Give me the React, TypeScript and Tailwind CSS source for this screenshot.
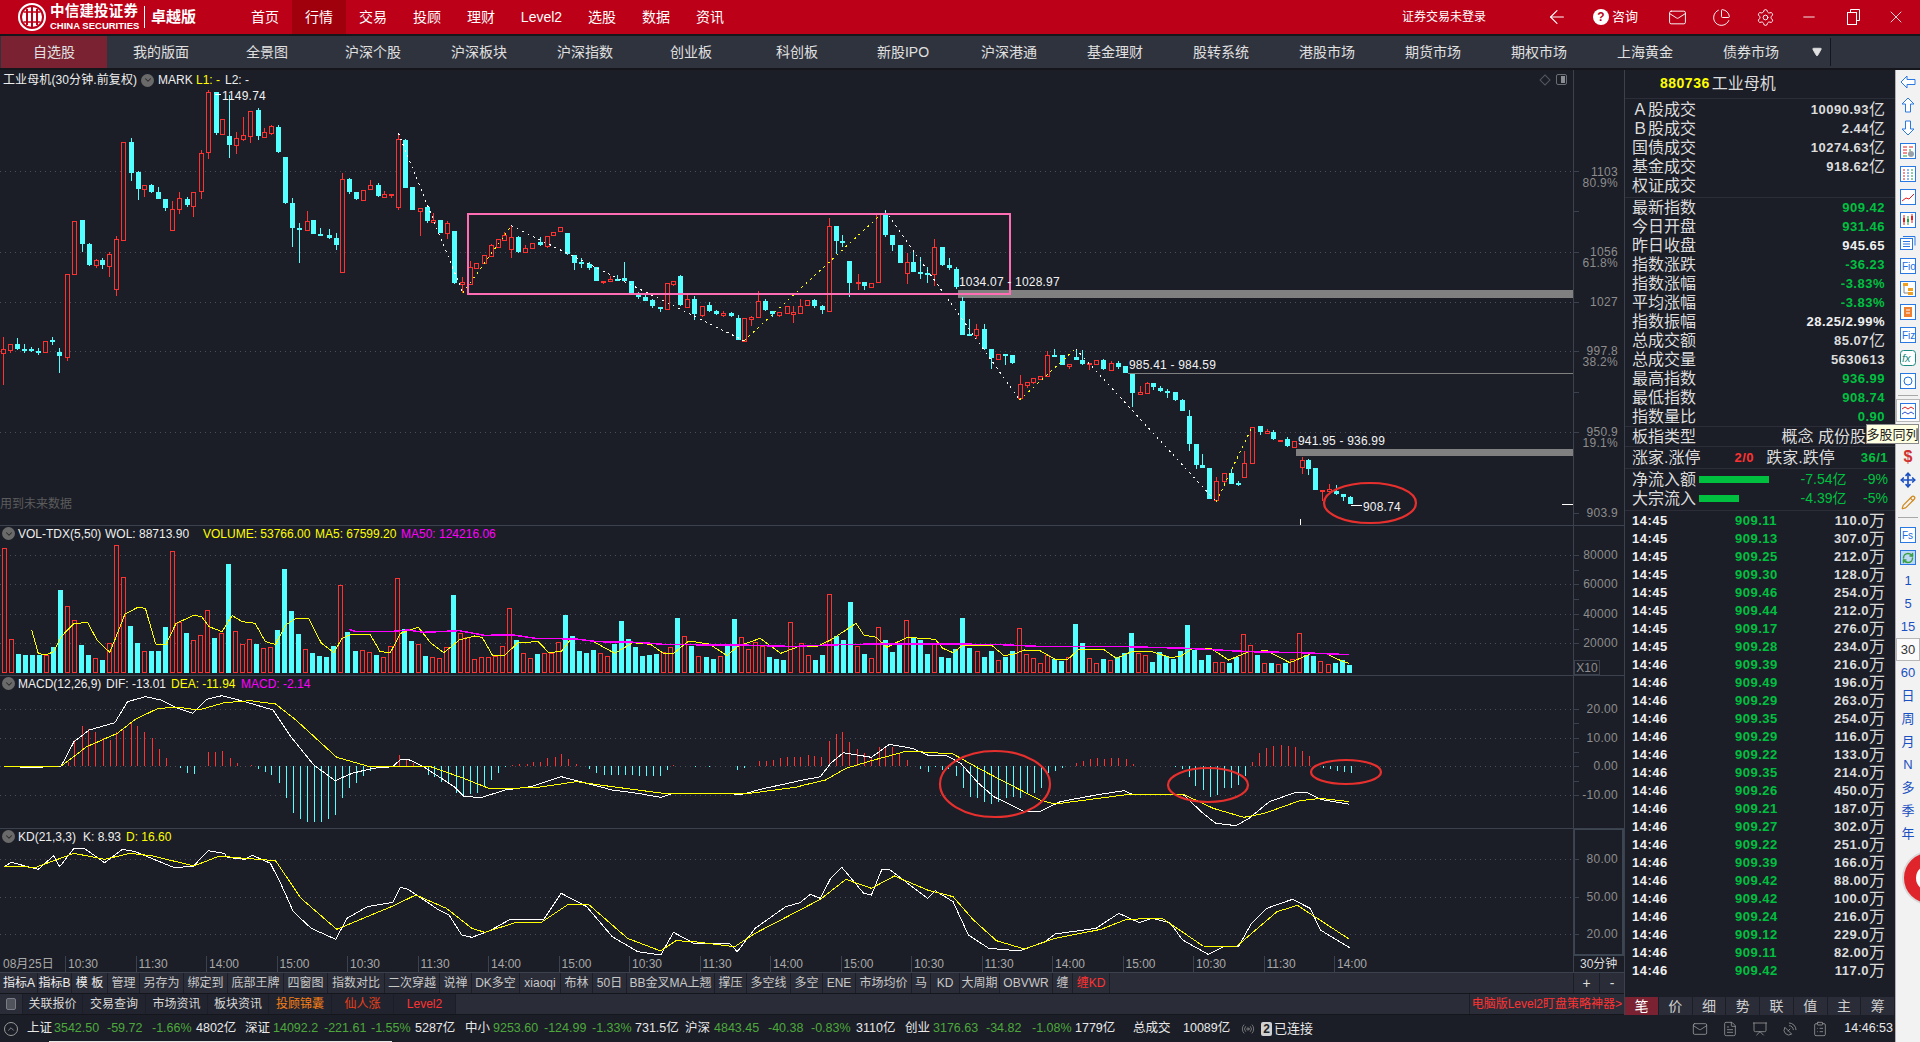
import React from 'react';
import {
  ArrowLeft, Mail, ChartPie, Settings, Minus, X, ChevronDown, ChevronUp, Triangle, Radio,
  FileText, Presentation, SatelliteDish, ClipboardList, Move, Pencil, RefreshCw,
} from 'lucide-react';

type Candle = [number, number, number, number, number, number]; // x, up, bodyTop, bodyBottom, high, low

// measured from the 30 minute chart, left / middle / right part
const candlesA: Candle[] = [
  [8,1,868,878,830,975],[25,1,853,870,853,878],[42,0,852,866,835,870],[59,0,866,870,852,878],[76,0,868,873,860,876],[93,0,872,876,865,884],
  [110,1,842,875,842,875],[127,0,840,844,830,855],[145,0,876,888,865,938],[165,1,643,892,643,902],[182,1,484,643,484,643],[200,0,480,551,480,576],
  [217,0,552,614,548,618],[234,1,601,616,597,624],[251,0,600,614,594,627],[268,1,582,617,575,650],[285,1,538,688,528,707],[302,1,247,539,247,541],
  [320,0,246,339,234,362],[337,0,336,386,333,420],[354,1,376,388,376,410],[371,0,375,396,372,400],[388,0,396,416,380,418],[405,0,417,444,417,453],
  [422,1,448,509,423,509],[439,1,415,448,396,461],[457,0,417,435,410,440],[474,1,397,437,397,470],[493,1,280,394,270,416],[510,1,97,277,90,296],
  [528,0,97,219,97,225],[545,1,178,221,178,221],[562,0,228,255,105,293],[579,1,235,256,216,281],[596,1,226,236,170,243],[613,1,154,227,154,248],
  [631,0,150,228,145,240],[648,1,217,231,205,233],[665,1,198,218,195,224],[682,0,200,276,196,279],[699,0,291,430,291,432],[716,0,429,503,415,560],
  [733,0,504,507,490,608],[751,1,484,509,453,509],[768,0,480,522,480,522],[785,0,522,525,505,525],[805,0,525,534,508,538],[822,0,534,554,520,570],
  [839,1,358,635,340,635],[856,0,357,396,354,402],[873,0,396,417,396,420],[890,1,389,419,389,423],[907,1,376,388,361,388],[925,0,375,407,369,410],
  [942,1,402,410,393,410],[959,1,403,405,403,413],[976,1,238,440,225,450],[993,0,240,384,238,384],[1010,0,381,449,381,449],[1028,1,443,452,443,527],
  [1045,0,442,484,437,490],[1062,1,480,485,460,485],[1079,0,480,519,480,519],[1096,1,490,520,484,537],[1113,0,513,668,513,672],[1133,1,667,671,652,700],
  [1151,1,622,671,604,671],[1167,1,608,623,608,623],[1185,1,586,610,586,612],[1202,1,556,587,552,590],[1219,1,538,560,538,560],[1236,1,526,539,515,539],
  [1253,1,530,568,497,594],[1270,0,531,577,528,580],[1287,1,565,577,556,577],[1304,1,548,565,548,565],[1322,0,546,555,532,557],[1339,1,527,557,527,564],
  [1356,1,515,526,515,526],[1373,1,500,514,500,514],[1390,0,520,581,520,584],[1407,0,586,608,584,630],[1424,0,606,610,595,624],[1442,0,612,624,607,630],
  [1461,0,622,662,620,662],[1478,1,662,666,662,671],[1495,1,657,662,648,664],[1512,0,656,660,646,664],[1530,0,653,664,606,664],[1547,0,664,698,664,698],[1564,0,705,712,695,716],
];
const candlesB: Candle[] = [
  [13,0,710,722,702,722],[30,0,720,738,717,744],[48,0,742,744,742,755],[65,1,670,746,670,746],[82,1,664,671,664,678],[99,0,648,736,646,738],
  [116,1,718,740,705,740],[133,0,718,763,708,780],[151,1,737,764,737,770],[168,0,736,753,727,757],[185,0,754,762,750,765],[204,1,760,764,753,770],
  [222,0,759,768,755,770],[239,0,775,840,765,840],[256,1,775,842,775,842],[272,1,770,776,768,797],[290,1,724,770,693,770],[307,0,723,750,717,752],
  [324,0,754,762,752,772],[341,1,757,764,757,770],[359,1,739,758,739,758],[376,1,757,761,737,788],[393,1,737,758,717,762],[410,1,721,736,721,736],
  [427,0,720,738,716,744],[445,0,739,750,735,762],[462,1,499,752,474,752],[479,0,498,543,498,582],[496,0,543,546,525,562],[513,0,603,668,603,710],
  [533,1,666,669,642,690],[550,0,666,678,666,690],[567,1,668,680,668,680],[584,1,460,665,460,670],[601,0,460,525,450,530],[618,0,525,555,525,572],
  [636,0,555,608,555,608],[653,1,607,640,578,672],[670,0,606,636,576,636],[687,0,636,641,592,657],[704,0,640,643,620,670],[721,1,562,643,537,678],
  [739,0,561,615,561,618],[756,0,615,625,595,630],[773,0,627,682,622,688],[790,0,724,825,712,825],[807,0,822,825,778,827],[824,1,808,826,792,838],
  [844,0,808,867,793,871],[861,0,867,893,867,926],[878,1,883,896,883,900],[895,0,883,886,883,915],[912,0,885,909,885,912],[930,1,973,1015,945,1020],
  [947,1,965,975,965,985],[964,1,955,966,955,973],[981,1,949,957,949,958],[998,1,885,948,874,950],[1015,0,885,887,867,887],[1033,0,885,915,885,915],
  [1050,1,913,917,913,927],[1067,0,892,899,866,899],[1084,0,901,912,870,915],[1101,1,909,912,909,930],[1118,1,901,912,901,915],[1135,0,900,927,898,930],
  [1153,1,909,929,903,929],[1172,0,909,922,903,926],[1189,0,918,938,918,938],[1206,0,942,998,942,1042],[1224,1,996,1001,978,1001],[1241,1,969,998,966,1000],
  [1258,0,969,981,969,990],[1275,0,984,993,978,995],[1292,0,994,997,987,1014],[1310,0,996,1020,996,1022],[1327,0,1020,1052,1017,1053],[1344,0,1068,1152,1050,1172],
  [1361,0,1152,1214,1152,1226],[1378,0,1215,1223,1182,1223],[1395,0,1225,1316,1225,1316],[1412,1,1264,1320,1252,1320],[1430,1,1240,1262,1240,1270],[1447,0,1240,1271,1228,1271],
  [1464,0,1270,1273,1262,1278],[1481,1,1210,1252,1172,1252],[1500,1,1102,1210,1102,1210],[1518,0,1098,1116,1098,1124],[1535,1,1114,1118,1106,1122],[1552,0,1116,1137,1110,1140],
];
const candlesC: Candle[] = [
  [120,1,1139,1141,1139,1146],[142,0,1136,1158,1132,1160],[163,1,1144,1160,1144,1160],[185,1,1200,1220,1191,1242],[205,0,1201,1227,1197,1245],[226,0,1224,1290,1224,1290],
  [247,1,1290,1294,1290,1323],[268,1,1288,1292,1272,1292],[289,0,1292,1302,1276,1304],[310,0,1303,1310,1303,1323],[331,0,1312,1331,1308,1331],
];

const candles = [
  ...candlesA.map((c) => ({ c, x: c[0] / 2.45 })),
  ...candlesB.map((c) => ({ c, x: 640 + c[0] / 2.45 })),
  ...candlesC.map((c) => ({ c, x: 1240 + c[0] / 3 })),
];

const volLeft: [number, number][] = [[1,85],[1,358],[0,403],[0,405],[0,405],[0,405],[1,405],[0,381],[0,210],[1,259],[1,301],[0,375],[0,405],[1,415],[0,420],[1,370],[1,75],[1,172],[0,318],[0,369],[1,393],[0,393],[0,393],[0,321],[1,94],[1,306],[0,339],[1,361],[1,346],[1,270],[0,354],[1,340],[0,132],[1,334],[1,372],[1,358],[0,372],[1,385],[1,382],[0,330],[0,147],[0,273],[0,342],[1,388],[0,400],[0,408],[0,411],[0,378],[1,195],[0,336],[0,393],[1,390],[1,397],[0,405],[1,410],[1,378],[1,175],[0,328],[0,363],[1,372],[0,408],[1,412],[1,414],[1,382],[0,225],[1,340],[1,350],[1,418],[1,412],[1,412],[1,408],[1,378],[1,265],[0,360],[1,400],[1,415],[0,402],[1,398],[1,398],[1,366],[0,285],[0,348],[0,393],[0,400],[0,390],[1,400],[1,408],[0,372],[0,303],[0,357],[0,381],[0,408],[0,405],[0,402],[1,397],[1,380],[0,294],[1,348],[0,378],[1,408],[0,411],[0,417],[1,408],[0,373],[0,297],[1,352],[1,388],[1,367],[1,378],[0,411],[0,417],[0,421],[1,307]];
const volRight: [number, number][] = [[1,370],[1,406],[0,420],[0,405],[1,223],[0,348],[0,360],[0,246],[1,377],[0,402],[1,415],[1,322],[0,360],[0,396],[0,373],[1,301],[0,355],[0,360],[0,402],[1,370],[0,411],[0,414],[0,387],[0,294],[0,384],[1,393],[0,411],[0,393],[1,420],[0,411],[0,393],[1,325],[1,402],[1,415],[1,430],[1,406],[0,417],[0,423],[1,412],[0,312],[0,369],[1,415],[1,430],[0,417],[1,420],[0,411],[0,399],[0,339],[1,399],[1,406],[0,426],[0,396],[0,408],[0,417],[0,393],[0,315],[0,390],[0,420],[0,405],[1,425],[1,427],[0,429],[0,411],[1,343],[1,376],[0,405],[1,430],[0,429],[1,433],[0,429],[1,418],[1,340],[0,405],[0,408],[1,424],[1,433],[0,430],[0,421],[0,435]];

const volBars = [
  ...volLeft.map(([up, top], i) => ({ up, top, x: 3.5 + 7.02 * i })),
  ...volRight.map(([up, top], i) => ({ up, top, x: 801 + 7.02 * i })),
];

type Pts = number[][];
const joinLine = (left: Pts, right: Pts) =>
  [...left.map(([x, y]) => `${x / 1.96},${520 + y / 3}`), ...right.map(([x, y]) => `${800 + x / 1.96},${520 + y / 3}`)].join(' ');

const ma5 = joinLine(
  [[62,330],[75,400],[90,405],[105,395],[120,350],[145,310],[172,308],[190,360],[215,397],[225,360],[245,282],[270,262],[285,265],[305,372],[325,375],[345,310],[380,286],[395,290],[410,320],[435,335],[455,287],[475,305],[500,310],[520,365],[540,373],[560,315],[580,295],[605,296],[630,370],[655,398],[670,355],[690,342],[725,342],[745,395],[765,398],[785,340],[820,322],[845,370],[870,398],[900,360],[930,348],[945,352],[965,405],[990,405],[1015,368],[1055,365],[1075,397],[1100,395],[1120,355],[1160,362],[1205,400],[1240,368],[1275,373],[1300,400],[1320,400],[1350,363],[1390,372],[1425,407],[1445,380],[1490,355],[1530,400],[1568,378]],
  [[0,378],[30,381],[60,360],[90,330],[110,310],[125,345],[150,352],[170,382],[210,352],[265,358],[280,385],[300,398],[320,375],[375,375],[400,407],[420,402],[440,390],[470,392],[500,418],[525,418],[545,390],[595,388],[620,415],[650,395],[690,395],[725,412],[745,410],[770,385],[805,385],[840,420],[880,395],[915,392],[960,428],[1000,402],[1030,400],[1060,422],[1077,430]],
);
const ma50 = joinLine(
  [[685,328],[695,334],[770,334],[800,330],[830,337],[900,332],[950,346],[1005,345],[1050,355],[1130,357],[1170,365],[1250,367],[1300,373],[1400,375],[1450,375],[1568,380]],
  [[0,378],[100,373],[200,372],[380,373],[480,380],[640,380],[760,385],[880,395],[980,398],[1077,404]],
);
const dif = joinLine(
  [[8,739],[55,742],[85,741],[120,738],[145,665],[175,630],[225,608],[250,545],[285,530],[315,540],[345,563],[378,580],[405,538],[435,527],[480,545],[535,570],[570,650],[615,735],[657,782],[690,760],[730,745],[770,740],[785,718],[800,718],[830,740],[860,770],[890,800],[910,830],[945,832],[990,810],[1040,800],[1100,770],[1150,790],[1200,810],[1250,820],[1295,832],[1320,820],[1430,820],[1450,825],[1490,808],[1568,782]],
  [[0,782],[40,770],[60,730],[85,698],[140,712],[175,673],[220,685],[250,705],[285,705],[315,730],[350,790],[380,830],[440,875],[470,875],[510,845],[580,825],[635,812],[650,822],[750,822],[790,880],[815,910],[855,917],[880,895],[920,845],[970,818],[995,818],[1020,838],[1077,853]],
);
const dea = joinLine(
  [[8,739],[120,738],[170,680],[230,640],[265,598],[310,565],[350,562],[390,570],[440,548],[490,542],[540,552],[580,600],[660,712],[720,738],[780,738],[840,738],[900,770],[960,806],[1050,803],[1130,785],[1200,800],[1300,820],[1470,820],[1568,800]],
  [[0,798],[50,780],[90,745],[140,722],[210,693],[300,702],[350,745],[470,840],[500,852],[650,822],[750,822],[810,865],[870,892],[910,880],[980,842],[1020,835],[1077,845]],
);
const kLine = joinLine(
  [[8,1040],[22,1027],[75,1048],[105,1007],[117,1040],[145,985],[165,985],[205,1028],[240,988],[265,995],[340,1042],[378,1040],[408,992],[440,1000],[445,1012],[480,1018],[495,1006],[530,1030],[550,1090],[575,1175],[610,1225],[658,1258],[680,1195],[720,1160],[770,1147],[785,1102],[800,1108],[860,1170],[880,1185],[905,1245],[925,1252],[960,1232],[1000,1198],[1065,1200],[1100,1120],[1150,1160],[1200,1250],[1250,1295],[1295,1305],[1320,1237],[1360,1270],[1430,1270],[1445,1295],[1480,1225],[1540,1160],[1568,1148]],
  [[0,1148],[20,1123],[40,1135],[60,1075],[82,1042],[125,1120],[140,1125],[160,1050],[175,1048],[250,1135],[265,1112],[300,1145],[330,1245],[370,1285],[410,1290],[435,1290],[480,1265],[500,1242],[580,1225],[625,1180],[665,1208],[690,1195],[725,1208],[750,1260],[800,1303],[830,1280],[860,1278],[885,1210],[915,1165],[965,1138],[1000,1165],[1020,1230],[1077,1283]],
);
const dLine = joinLine(
  [[8,1038],[70,1042],[145,1000],[205,1018],[255,1000],[300,1008],[380,1038],[430,1008],[480,1015],[540,1022],[590,1135],[660,1228],[770,1158],[815,1125],[875,1165],[925,1225],[950,1237],[1010,1208],[1060,1208],[1115,1152],[1155,1155],[1230,1255],[1295,1293],[1325,1262],[1360,1265],[1440,1280],[1480,1240],[1568,1170]],
  [[0,1170],[40,1138],[90,1078],[140,1105],[185,1068],[250,1110],[300,1130],[340,1200],[385,1262],[440,1287],[500,1255],[590,1228],[640,1198],[710,1195],[790,1278],[855,1280],[935,1175],[975,1156],[1077,1258]],
);

const macdLeft: number[][] = [[133,725],[146,660],[160,618],[173,628],[187,635],[201,655],[215,660],[228,635],[242,630],[256,605],[269,618],[283,636],[297,655],[311,687],[325,713],[338,737],[352,745],[366,760],[380,762],[408,697],[422,695],[436,693],[450,715],[464,730],[491,736],[505,746],[519,755],[532,765],[546,790],[560,833],[574,878],[588,897],[601,905],[615,907],[629,905],[643,897],[657,885],[671,833],[685,805],[698,790],[712,768],[726,753],[740,745],[754,742],[782,706],[796,720],[810,730],[824,735],[838,765],[851,770],[865,785],[879,785],[893,820],[907,832],[921,822],[935,820],[948,800],[962,780],[976,760],[990,741],[1004,734],[1018,733],[1032,731],[1045,727],[1059,725],[1073,714],[1087,712],[1100,702],[1114,716],[1128,732],[1155,748],[1169,758],[1183,765],[1197,765],[1211,765],[1225,765],[1238,765],[1252,768],[1266,768],[1280,768],[1294,768],[1308,750],[1320,736],[1362,741],[1390,741],[1445,750],[1459,745],[1488,722],[1501,722],[1515,720],[1529,715],[1543,711],[1557,712]];
const macdRight: number[][] = [[0,712],[15,706],[28,708],[42,712],[56,664],[70,642],[83,636],[97,665],[112,687],[126,700],[140,713],[154,680],[167,680],[181,680],[195,700],[209,720],[222,738],[236,748],[250,755],[264,742],[278,750],[291,748],[305,768],[319,805],[333,830],[347,835],[361,845],[375,852],[389,845],[403,835],[417,832],[431,835],[445,820],[459,820],[472,805],[486,760],[499,753],[513,743],[527,738],[541,730],[554,723],[568,716],[582,714],[596,716],[610,715],[624,714],[638,716],[652,732],[680,738],[707,738],[735,742],[748,748],[762,770],[775,797],[789,810],[803,830],[817,825],[831,805],[845,803],[858,795],[872,768],[886,726],[900,698],[914,685],[928,678],[942,675],[956,678],[970,682],[983,692],[997,708],[1025,745],[1038,748],[1052,752],[1066,755],[1080,760]];
const macdBars = [
  ...macdLeft.map(([x, y]) => ({ x: x / 1.96, y: 520 + y / 3 })),
  ...macdRight.map(([x, y]) => ({ x: 800 + x / 1.96, y: 520 + y / 3 })),
];

const zigzag: [number, number, string][] = [
  [398.4, 133, '#ffffff'], [462.9, 293, '#ffff00'], [511.4, 225.7, '#ffffff'], [744, 340.7, '#ffff00'], [885, 210.7, '#ffffff'],
  [1019.6, 400, '#ffff00'], [1075.5, 348.7, '#ffffff'], [1216.3, 501.7, '#ffff00'], [1252.2, 426.7, '#ffffff'],
];

const GRID = '#4b4e58';
const AXIS = '#3c414e';
const LABEL = '#8d8d8d';

const Grid = ({ ys, x2 = 1573 }: { ys: number[]; x2?: number }) => (
  <>
    {ys.map((y) => (
      <line key={y} x1={0} x2={x2} y1={y + 0.5} y2={y + 0.5} stroke={GRID} strokeDasharray="1 4" />
    ))}
  </>
);

const Axis = ({ top, bottom, labels, ticks }: { top: number; bottom: number; labels: [string, number][]; ticks: number[] }) => (
  <g>
    <line x1={1573.5} x2={1573.5} y1={top} y2={bottom} stroke={AXIS} />
    {ticks.map((y) => (
      <line key={y} x1={1574} x2={1579} y1={y + 0.5} y2={y + 0.5} stroke={AXIS} />
    ))}
    {labels.map(([t, y]) => (
      <text key={t} x={1618} y={y + 4} textAnchor="end" fontSize={12} fill={LABEL} letterSpacing={0.3}>
        {t}
      </text>
    ))}
  </g>
);

const Ellipse = ({ cx, cy, rx, ry }: { cx: number; cy: number; rx: number; ry: number }) => (
  <ellipse cx={cx} cy={cy} rx={rx} ry={ry} fill="none" stroke="#e7302e" strokeWidth={2.2} />
);

const Knob = () => (
  <span className="flex h-[13px] w-[13px] shrink-0 items-center justify-center rounded-full bg-[#6a6a6a]">
    <ChevronDown size={10} strokeWidth={2.5} className="text-[#2a2a2a]" />
  </span>
);

const MainPane = () => (
  <div className="relative h-[456px] border-b border-[#3c414e]">
    <svg width={1624} height={455} viewBox="0 70 1624 455" className="block">
      <Grid ys={[171, 252, 302, 351, 432]} />
      <g shapeRendering="crispEdges">
        <rect x={958} y={290} width={615} height={8} fill="#808080" />
        <rect x={1296} y={449} width={277} height={7} fill="#808080" />
        <rect x={1128} y={373} width={445} height={1} fill="#808080" />
        {candles.map(({ c, x }, i) => {
          const [, up, top, bot, hi, lo] = c;
          const px = Math.round(x);
          const y = (v: number) => Math.round(60 + v / 3);
          const color = up ? '#ff3232' : '#54ffff';
          return (
            <g key={i}>
              <line x1={px + 0.5} x2={px + 0.5} y1={y(hi)} y2={y(lo)} stroke={color} />
              {up ? (
                <rect x={px - 1.5} y={y(top) + 0.5} width={4} height={Math.max(y(bot) - y(top), 1)} fill="#1b1e27" stroke={color} />
              ) : (
                <rect x={px - 2} y={y(top)} width={5} height={Math.max(y(bot) - y(top), 2)} fill={color} />
              )}
            </g>
          );
        })}
        {zigzag.slice(0, -1).map(([x, y, color], i) => (
          <line key={i} x1={x} y1={y} x2={zigzag[i + 1][0]} y2={zigzag[i + 1][1]} stroke={color} strokeDasharray="2 4" />
        ))}
        <rect x={468} y={214} width={542} height={80} fill="none" stroke="#ff6eb4" strokeWidth={2} />
        <line x1={215} x2={221} y1={94} y2={94} stroke="#fff" />
        <line x1={1351} x2={1362} y1={505} y2={505} stroke="#fff" />
        <line x1={1562} x2={1573} y1={504} y2={504} stroke="#fff" />
        <line x1={1300.5} x2={1300.5} y1={519} y2={525} stroke="#fff" />
      </g>
      <Ellipse cx={1370} cy={503} rx={46} ry={20} />
      <g fontSize={12} fill="#f2f2f2" letterSpacing={0.2}>
        <text x={222} y={100}>1149.74</text>
        <text x={959} y={286}>1034.07 - 1028.97</text>
        <text x={1129} y={369}>985.41 - 984.59</text>
        <text x={1298} y={445}>941.95 - 936.99</text>
        <text x={1363} y={511}>908.74</text>
      </g>
      <Axis
        top={70}
        bottom={525}
        ticks={[171, 211, 252, 302, 351, 392, 432, 513]}
        labels={[['1103', 172], ['80.9%', 183], ['1056', 252], ['61.8%', 263], ['1027', 302], ['997.8', 351], ['38.2%', 362], ['950.9', 432], ['19.1%', 443], ['903.9', 513]]}
      />
    </svg>
    <div className="absolute left-[3px] top-[2px] flex h-[16px] items-center text-[12px] leading-none text-[#eeeeee]">
      <span className="w-[138px] tracking-[0.1px]">工业母机(30分钟.前复权)</span>
      <Knob />
      <span className="ml-[4px] w-[38px]">MARK</span>
      <span className="w-[29px] text-[#ffff00]">L1: -</span>
      <span>L2: -</span>
    </div>
    <div className="absolute left-0 top-[428px] text-[12px] leading-none text-[#5c5c5c]">用到未来数据</div>
    <div className="absolute left-[1541px] top-[4px] flex items-center gap-[7px]">
      <span className="h-[8px] w-[8px] rotate-45 border border-[#55585f]" />
      <span className="flex h-[11px] w-[11px] justify-end rounded-[2px] border border-[#6a6d74] p-[1px]">
        <span className="h-full w-[4px] bg-[#8a8d94]" />
      </span>
    </div>
  </div>
);

const VolPane = () => (
  <div className="relative h-[150px] border-b border-[#3c414e]">
    <svg width={1624} height={149} viewBox="0 526 1624 149" className="block">
      <Grid ys={[555, 584, 614, 643]} />
      <g shapeRendering="crispEdges">
        {volBars.map(({ up, top, x }, i) => {
          const px = Math.round(x);
          const y = Math.round(520 + top / 3);
          return up ? (
            <rect key={i} x={px - 1.5} y={y + 0.5} width={4} height={672 - y} fill="#1b1e27" stroke="#ff3232" />
          ) : (
            <rect key={i} x={px - 2} y={y} width={5} height={673 - y} fill="#54ffff" />
          );
        })}
        <polyline points={ma5} fill="none" stroke="#ffff00" />
        <polyline points={ma50} fill="none" stroke="#ff00ff" strokeWidth={1.5} />
      </g>
      <Axis
        top={526}
        bottom={675}
        ticks={[555, 570, 584, 599, 614, 629, 643]}
        labels={[['80000', 555], ['60000', 584], ['40000', 614], ['20000', 643]]}
      />
    </svg>
    <div className="absolute left-[1574px] top-[134px] flex h-[15px] w-[26px] items-center justify-center border border-[#3c414e] text-[12px] leading-none text-[#8d8d8d]">
      X10
    </div>
    <div className="absolute left-[2px] top-0 flex h-[15px] items-center text-[12px] leading-none text-[#eeeeee]">
      <Knob />
      <span className="ml-[3px] w-[87px]">VOL-TDX(5,50)</span>
      <span className="w-[98px]">WOL: 88713.90</span>
      <span className="w-[112px] text-[#ffff00]">VOLUME: 53766.00</span>
      <span className="w-[86px] text-[#ffff00]">MA5: 67599.20</span>
      <span className="text-[#ff00ff]">MA50: 124216.06</span>
    </div>
  </div>
);

const MacdPane = () => (
  <div className="relative h-[153px] border-b border-[#3c414e]">
    <svg width={1624} height={152} viewBox="0 676 1624 152" className="block">
      <Grid ys={[709, 738, 766, 795]} />
      <g shapeRendering="crispEdges">
        {macdBars.map(({ x, y }, i) => (
          <line key={i} x1={Math.round(x) + 0.5} x2={Math.round(x) + 0.5} y1={766} y2={y} stroke={y < 766 ? '#ff3232' : '#54ffff'} />
        ))}
        <polyline points={dif} fill="none" stroke="#ffffff" />
        <polyline points={dea} fill="none" stroke="#ffff00" />
      </g>
      <Ellipse cx={995} cy={784} rx={55} ry={33} />
      <Ellipse cx={1208} cy={785} rx={40} ry={17} />
      <Ellipse cx={1346} cy={772} rx={35} ry={12} />
      <Axis
        top={676}
        bottom={828}
        ticks={[709, 723, 738, 752, 766, 781, 795]}
        labels={[['20.00', 709], ['10.00', 738], ['0.00', 766], ['-10.00', 795]]}
      />
    </svg>
    <div className="absolute left-[2px] top-0 flex h-[15px] items-center text-[12px] leading-none text-[#eeeeee]">
      <Knob />
      <span className="ml-[3px] w-[88px]">MACD(12,26,9)</span>
      <span className="w-[65px]">DIF: -13.01</span>
      <span className="w-[70px] text-[#ffff00]">DEA: -11.94</span>
      <span className="text-[#ff00ff]">MACD: -2.14</span>
    </div>
  </div>
);

const KdPane = () => (
  <div className="relative h-[127px]">
    <svg width={1624} height={127} viewBox="0 829 1624 127" className="block">
      <Grid ys={[859, 897, 934]} />
      <g shapeRendering="crispEdges">
        <polyline points={kLine} fill="none" stroke="#ffffff" />
        <polyline points={dLine} fill="none" stroke="#ffff00" />
        <rect x={1574} y={829} width={49} height={126} fill="none" stroke="#3c4552" strokeWidth={2} />
      </g>
      <Axis top={829} bottom={956} ticks={[859, 897, 934]} labels={[['80.00', 859], ['50.00', 897], ['20.00', 934]]} />
    </svg>
    <div className="absolute left-[2px] top-0 flex h-[15px] items-center text-[12px] leading-none text-[#eeeeee]">
      <Knob />
      <span className="ml-[3px] w-[65px]">KD(21,3,3)</span>
      <span className="w-[43px]">K: 8.93</span>
      <span className="text-[#ffff00]">D: 16.60</span>
    </div>
  </div>
);

const times = ['10:30', '11:30', '14:00', '15:00', '10:30', '11:30', '14:00', '15:00', '10:30', '11:30', '14:00', '15:00', '10:30', '11:30', '14:00', '15:00', '10:30', '11:30', '14:00'];

const TimeAxis = () => (
  <div className="flex h-[17px] border-b border-[#3c414e] text-[12px] leading-[16px] text-[#a8a8a8]">
    <span className="w-[65px] pl-[3px]">08月25日</span>
    {times.map((t, i) => (
      <span key={i} className="w-[70.5px] border-l border-[#3c414e] pl-[2px]">{t}</span>
    ))}
    <span className="ml-auto w-[51px] border-l border-[#3c414e] pl-[6px] text-[#dddddd]">30分钟</span>
  </div>
);

const toolItems = [
  { t: '指标A', w: 'w-[37px]', on: true }, { t: '指标B', w: 'w-[34px]', on: true }, { t: '模 板', w: 'w-[36px]', on: true }, { t: '管理', w: 'w-[32px]' },
  { t: '另存为', w: 'w-[44px]' }, { t: '绑定到', w: 'w-[44px]' }, { t: '底部王牌', w: 'w-[56px]' }, { t: '四窗图', w: 'w-[44px]' },
  { t: '指数对比', w: 'w-[57px]' }, { t: '二次穿越', w: 'w-[55px]' }, { t: '说禅', w: 'w-[32px]' }, { t: 'DK多空', w: 'w-[48px]' },
  { t: 'xiaoqi', w: 'w-[41px]' }, { t: '布林', w: 'w-[32px]' }, { t: '50日', w: 'w-[34px]' }, { t: 'BB金叉MA上翘', w: 'w-[88px]' },
  { t: '撑压', w: 'w-[32px]' }, { t: '多空线', w: 'w-[44px]' }, { t: '多空', w: 'w-[32px]' }, { t: 'ENE', w: 'w-[33px]' },
  { t: '市场均价', w: 'w-[56px]' }, { t: '马', w: 'w-[19px]' }, { t: 'KD', w: 'w-[29px]' }, { t: '大周期', w: 'w-[40px]' },
  { t: 'OBVWR', w: 'w-[53px]' }, { t: '缠', w: 'w-[20px]' }, { t: '缠KD', w: 'w-[37px]', red: true },
];

const Toolbar = () => (
  <div className="flex h-[21px] items-stretch border-b border-[#14161c] bg-[#2a2d38] pl-[1px] text-[12px] text-[#c8c8c8]">
    {toolItems.map((it) => (
      <span
        key={it.t}
        className={`flex ${it.w} shrink-0 items-center justify-center whitespace-nowrap border-r border-[#1b1e27] ${it.red ? 'text-[#ff3232]' : it.on ? 'text-[#eeeeee]' : ''}`}
      >
        {it.t}
      </span>
    ))}
    <span className="flex-1 border-r border-[#1b1e27]" />
    <span className="flex w-[26px] items-center justify-center border-r border-[#1b1e27] text-[14px] text-[#dddddd]">+</span>
    <span className="flex w-[24px] items-center justify-center text-[14px] text-[#dddddd]">-</span>
  </div>
);

const bottomTabs = [
  { t: '关联报价', w: 'w-[60px]', c: 'text-[#d8d8d8]' }, { t: '交易查询', w: 'w-[63px]', c: 'text-[#d8d8d8]' }, { t: '市场资讯', w: 'w-[62px]', c: 'text-[#d8d8d8]' },
  { t: '板块资讯', w: 'w-[61px]', c: 'text-[#d8d8d8]' }, { t: '投顾锦囊', w: 'w-[63px]', c: 'text-[#f57f17]' }, { t: '仙人涨', w: 'w-[62px]', c: 'text-[#e8401c]' },
  { t: 'Level2', w: 'w-[62px]', c: 'text-[#ff3232]' },
];

const BottomTabs = () => (
  <div className="flex h-[22px] items-stretch border-b border-[#14161c] bg-[#2a2d38] text-[12px]">
    <span className="flex w-[23px] items-center justify-center border-r border-[#1b1e27]">
      <span className="h-[12px] w-[10px] rounded-[2px] border border-[#7a7d85] bg-[#50535c]" />
    </span>
    {bottomTabs.map((it) => (
      <span key={it.t} className={`flex ${it.w} items-center justify-center border-r border-[#1b1e27] bg-[#21242e] ${it.c}`}>
        {it.t}
      </span>
    ))}
    <span className="flex-1" />
    <span className="flex w-[155px] items-center justify-end whitespace-nowrap border-l border-[#1b1e27] pr-[2px] text-[12px] text-[#ff3232]">
      电脑版Level2盯盘策略神器&gt;
    </span>
  </div>
);

const Num = ({ children, className = '' }: { children: React.ReactNode; className?: string }) => (
  <span className={`text-[13px] font-bold tracking-[0.5px] ${className}`}>{children}</span>
);

const G = 'text-[#00c040]';
const W = 'text-[#dcdcdc]';

const volumeRows: [string, string][] = [['Ａ股成交', '10090.93'], ['Ｂ股成交', '2.44'], ['国债成交', '10274.63'], ['基金成交', '918.62'], ['权证成交', '']];
const indexRows: [string, string, string][] = [
  ['最新指数', '909.42', G], ['今日开盘', '931.46', G], ['昨日收盘', '945.65', 'text-[#f0f0f0]'], ['指数涨跌', '-36.23', G],
  ['指数涨幅', '-3.83%', G], ['平均涨幅', '-3.83%', G], ['指数振幅', '28.25/2.99%', 'text-[#f0f0f0]'], ['总成交额', '85.07', W],
  ['总成交量', '5630613', W], ['最高指数', '936.99', G], ['最低指数', '908.74', G], ['指数量比', '0.90', G],
];

const trades: [string, string, string][] = [
  ['14:45', '909.11', '110.0'], ['14:45', '909.13', '307.0'], ['14:45', '909.25', '212.0'], ['14:45', '909.30', '128.0'], ['14:45', '909.46', '254.0'],
  ['14:45', '909.44', '212.0'], ['14:45', '909.17', '276.0'], ['14:45', '909.28', '234.0'], ['14:46', '909.39', '216.0'], ['14:46', '909.49', '196.0'],
  ['14:46', '909.29', '263.0'], ['14:46', '909.35', '254.0'], ['14:46', '909.29', '116.0'], ['14:46', '909.22', '133.0'], ['14:46', '909.35', '214.0'],
  ['14:46', '909.26', '450.0'], ['14:46', '909.21', '187.0'], ['14:46', '909.27', '302.0'], ['14:46', '909.22', '251.0'], ['14:46', '909.39', '166.0'],
  ['14:46', '909.42', '88.00'], ['14:46', '909.42', '100.0'], ['14:46', '909.24', '216.0'], ['14:46', '909.12', '229.0'], ['14:46', '909.11', '82.00'],
  ['14:46', '909.42', '117.0'],
];

const rightTabs = ['笔', '价', '细', '势', '联', '值', '主', '筹'];

const QuotePanel = () => (
  <div className="relative flex h-[945px] w-[271px] flex-col border-l border-[#3c414e] text-[16px] leading-[19px] text-[#dcdcdc]">
    <div className="flex h-[29px] items-center border-b border-[#2b2e38] pb-[2px] pl-[35px]">
      <Num className="text-[14px] text-[#ffff00]">880736</Num>
      <span className="ml-[2px]">工业母机</span>
    </div>
    <div className="border-b border-[#2b2e38] pb-[2px] pl-[7px] pr-[10px] pt-[1px]">
      {volumeRows.map(([k, v]) => (
        <div key={k} className="flex h-[19px] items-center justify-between">
          <span>{k}</span>
          {v && (
            <span className="flex items-center">
              <Num>{v}</Num>亿
            </span>
          )}
        </div>
      ))}
    </div>
    <div className="border-b border-[#2b2e38] pl-[7px] pr-[10px]">
      {indexRows.map(([k, v, c]) => (
        <div key={k} className="flex h-[19px] items-center justify-between">
          <span>{k}</span>
          <span className="flex items-center">
            <Num className={c}>{v}</Num>
            {k === '总成交额' && '亿'}
          </span>
        </div>
      ))}
    </div>
    <div className="flex h-[20px] items-center justify-between border-b border-[#2b2e38] pl-[7px] pr-[29px]">
      <span>板指类型</span>
      <span>概念 成份股</span>
    </div>
    <div className="flex h-[22px] items-center border-b border-[#2b2e38] pl-[7px] pr-[7px]">
      <span className="w-[103px]">涨家.涨停</span>
      <Num className="w-[32px] text-[#ff3232]">2/0</Num>
      <span className="w-[95px]">跌家.跌停</span>
      <Num className={`ml-auto ${G}`}>36/1</Num>
    </div>
    <div className="border-b border-[#2b2e38] pb-[2px] pl-[7px] pr-[7px] pt-[1px]">
      {[['净流入额', 'w-[70px]', '-7.54亿', '-9%'], ['大宗流入', 'w-[40px]', '-4.39亿', '-5%']].map(([k, w, v, p]) => (
        <div key={k} className="flex h-[19px] items-center">
          <span className="w-[68px]">{k}</span>
          <span className="w-[102px]">
            <span className={`block h-[7px] ${w} bg-[#00c040]`} />
          </span>
          <span className={`w-[63px] text-[14px] ${G}`}>{v}</span>
          <span className={`ml-auto text-[14px] ${G}`}>{p}</span>
        </div>
      ))}
    </div>
    <div className="pl-[7px] pr-[10px]">
      {trades.map(([t, p, v], i) => (
        <div key={i} className="flex h-[18px] items-center">
          <Num className="w-[103px] text-[#f0f0f0]">{t}</Num>
          <Num className={G}>{p}</Num>
          <span className="ml-auto flex items-center">
            <Num>{v}</Num>万
          </span>
        </div>
      ))}
    </div>
    <div className="mt-auto flex h-[18px] items-stretch text-[14px] text-[#cfcfcf]">
      {rightTabs.map((t, i) => (
        <span key={t} className={`flex flex-1 items-center justify-center border-r border-[#1b1e27] ${i === 0 ? 'bg-[#7a2232] text-white' : 'bg-[#2a2d38]'}`}>
          {t}
        </span>
      ))}
    </div>
    <div className="absolute left-[241px] top-[354px] z-10 flex h-[20px] w-[53px] items-center justify-center whitespace-nowrap border border-[#8a8a8a] bg-[#ffffe1] text-[13px] text-[#222222]">
      多股同列
    </div>
  </div>
);

const statusCells: [string, string, string][] = [
  ['上证', 'w-[27px]', 'text-[#e8e8e8]'], ['3542.50', 'w-[53px]', 'text-[#4da83c]'], ['-59.72', 'w-[45px]', 'text-[#4da83c]'], ['-1.66%', 'w-[44px]', 'text-[#4da83c]'], ['4802亿', 'w-[49px]', 'text-[#e8e8e8]'],
  ['深证', 'w-[28px]', 'text-[#e8e8e8]'], ['14092.2', 'w-[51px]', 'text-[#4da83c]'], ['-221.61', 'w-[47px]', 'text-[#4da83c]'], ['-1.55%', 'w-[44px]', 'text-[#4da83c]'], ['5287亿', 'w-[50px]', 'text-[#e8e8e8]'],
  ['中小', 'w-[28px]', 'text-[#e8e8e8]'], ['9253.60', 'w-[51px]', 'text-[#4da83c]'], ['-124.99', 'w-[48px]', 'text-[#4da83c]'], ['-1.33%', 'w-[43px]', 'text-[#4da83c]'], ['731.5亿', 'w-[50px]', 'text-[#e8e8e8]'],
  ['沪深', 'w-[29px]', 'text-[#e8e8e8]'], ['4843.45', 'w-[54px]', 'text-[#4da83c]'], ['-40.38', 'w-[43px]', 'text-[#4da83c]'], ['-0.83%', 'w-[45px]', 'text-[#4da83c]'], ['3110亿', 'w-[49px]', 'text-[#e8e8e8]'],
  ['创业', 'w-[28px]', 'text-[#e8e8e8]'], ['3176.63', 'w-[53px]', 'text-[#4da83c]'], ['-34.82', 'w-[46px]', 'text-[#4da83c]'], ['-1.08%', 'w-[43px]', 'text-[#4da83c]'], ['1779亿', 'w-[58px]', 'text-[#e8e8e8]'],
  ['总成交', 'w-[50px]', 'text-[#e8e8e8]'], ['10089亿', 'w-[58px]', 'text-[#e8e8e8]'],
];

const StatusBar = () => (
  <div className="relative flex h-[27px] items-center text-[12.5px] text-[#e8e8e8]">
    <span className="ml-[4px] flex h-[14px] w-[14px] items-center justify-center rounded-full border border-[#9a9a9a]">
      <ChevronUp size={10} className="text-[#9a9a9a]" />
    </span>
    <span className="w-[9px]" />
    {statusCells.map(([t, w, c], i) => (
      <span key={i} className={`${w} shrink-0 whitespace-nowrap ${c}`}>{t}</span>
    ))}
    <Radio size={14} strokeWidth={1.3} className="mr-[6px] text-[#8f8f8f]" />
    <span className="mr-[2px] flex h-[14px] w-[11px] items-center justify-center rounded-[2px] bg-[#d0d0d0] text-[12px] font-bold text-[#222222]">2</span>
    <span className="text-[13px]">已连接</span>
    <span className="ml-auto flex items-center gap-[14px] text-[#9a9a9a]">
      <Mail size={16} strokeWidth={1.2} />
      <FileText size={16} strokeWidth={1.2} />
      <Presentation size={16} strokeWidth={1.2} />
      <SatelliteDish size={16} strokeWidth={1.2} />
      <ClipboardList size={16} strokeWidth={1.2} />
    </span>
    <span className="ml-[16px] mr-[2px] text-[#e8e8e8]">14:46:53</span>
    <span className="absolute bottom-0 left-[49px] h-px w-[343px] bg-[#e8e8e8]" />
  </div>
);

const Box = ({ children }: { children: React.ReactNode }) => (
  <svg width={16} height={16} viewBox="0 0 16 16" fill="none" strokeWidth={1}>
    <rect x={0.5} y={0.5} width={15} height={15} fill="#ffffff" stroke="#2a78e4" />
    {children}
  </svg>
);

const Arrow = ({ rot }: { rot: string }) => (
  <svg width={16} height={16} viewBox="0 0 16 16" className={rot}>
    <path d="M8 1 L14 7 H10.5 V15 H5.5 V7 H2 Z" fill="#ffffff" stroke="#2a78e4" />
  </svg>
);

const sideTop: React.ReactNode[] = [
  <Arrow rot="-rotate-90" />,
  <Arrow rot="" />,
  <Arrow rot="rotate-180" />,
  <Box><path d="M3 4h4M3 7h4M3 10h4M9 4h4" stroke="#e02020" /><path d="M9 7h2M3 13h4" stroke="#20a040" /><circle cx={11} cy={11} r={3} fill="#9aa0a8" /></Box>,
  <Box><path d="M3 4h2M3 7h2M3 10h2M3 13h2" stroke="#e02020" /><path d="M7 4h2M7 7h2M7 10h2M7 13h2" stroke="#1a6fe0" /><path d="M11 4h2M11 7h2M11 10h2M11 13h2" stroke="#20a040" /></Box>,
  <Box><path d="M2 12 L6 9 L9 10 L14 5" stroke="#e02020" /></Box>,
  <Box><path d="M4 3v10" stroke="#e02020" /><rect x={3} y={6} width={2} height={4} fill="#e02020" /><path d="M8 4v9" stroke="#20a040" /><rect x={7} y={7} width={2} height={3} fill="#20a040" /><path d="M12 2v9" stroke="#e02020" /><rect x={11} y={4} width={2} height={4} fill="#e02020" /></Box>,
  <svg width={16} height={16} viewBox="0 0 16 16" fill="none" stroke="#2a78e4"><rect x={0.5} y={3.5} width={12} height={11} fill="#ffffff" /><path d="M3 1.5h12v9M3 6.5h7M3 9h7M3 11.5h7" /></svg>,
  <Box><text x={2} y={12} fontSize={10} fill="#1a6fe0">Fio</text></Box>,
  <Box><rect x={3} y={2} width={5} height={3} fill="#f0a020" /><rect x={8} y={7} width={5} height={3} fill="#f0a020" /><rect x={8} y={11} width={5} height={3} fill="#f0a020" /><path d="M4 5v7h4" stroke="#888" /></Box>,
  <Box><rect x={4} y={3} width={8} height={10} fill="#f08030" /><path d="M6 6h4M6 9h4" stroke="#fff" /></Box>,
  <Box><text x={2} y={12} fontSize={10} fill="#1a6fe0">Fiz</text></Box>,
  <svg width={16} height={16} viewBox="0 0 16 16" fill="none"><rect x={0.5} y={0.5} width={15} height={15} rx={3} fill="#ffffff" stroke="#1a8a80" /><text x={2} y={12} fontSize={11} fontStyle="italic" fill="#1a8a80">fx</text></svg>,
  <Box><circle cx={8} cy={8} r={4} stroke="#1a6fe0" /></Box>,
];

const periods = ['1', '5', '15', '30', '60', '日', '周', '月', 'N', '多', '季', '年'];

const Sidebar = () => (
  <div className="relative flex w-[25px] flex-col items-center overflow-hidden border-l border-[#b0b0b0] bg-[#f2f2f2] text-[13px] text-[#1a50c0]">
    {sideTop.map((icon, i) => (
      <span key={i} className="flex h-[23px] w-full items-center justify-center">{icon}</span>
    ))}
    <span className="mt-[3px] h-px w-[20px] bg-[#a8a8a8]" />
    <span className="mt-[3px] flex h-[23px] w-full items-center justify-center border border-[#b8b8b8] bg-[#fbfbfb]">
      <Box><path d="M2 6 L5 4 L8 6 L11 4 L14 6" stroke="#e02020" /><path d="M2 11 L5 9 L8 11 L11 9 L14 11" stroke="#2a50d0" /></Box>
    </span>
    <span className="h-[23px]" />
    <span className="flex h-[23px] w-full items-center justify-center text-[16px] font-bold leading-none text-[#d03030]">$</span>
    <span className="flex h-[23px] w-full items-center justify-center"><Move size={16} strokeWidth={2.5} className="text-[#1a50c0]" /></span>
    <span className="flex h-[23px] w-full items-center justify-center"><Pencil size={15} className="text-[#d08a20]" /></span>
    <span className="mt-[3px] h-px w-[20px] bg-[#a8a8a8]" />
    <span className="mt-[5px] flex h-[23px] w-full items-center justify-center">
      <Box><text x={2} y={12} fontSize={10} fill="#1a6fe0">Fs</text></Box>
    </span>
    <span className="flex h-[23px] w-full items-center justify-center">
      <span className="flex h-[15px] w-[16px] items-center justify-center border border-[#2a78e4] bg-[#bcd8f5]">
        <RefreshCw size={12} strokeWidth={3} className="text-[#3aa040]" />
      </span>
    </span>
    {periods.map((p) => (
      <span
        key={p}
        className={`flex h-[23px] w-full shrink-0 items-center justify-center ${p === '30' ? 'border border-[#b8b8b8] bg-[#fbfbfb] text-[#333333]' : ''}`}
      >
        {p}
      </span>
    ))}
    <span className="absolute left-[8px] top-[783px] h-[50px] w-[50px] rounded-full border-[12px] border-[#e0242c] bg-white shadow-[0_0_0_2px_#d8d8d8]" />
  </div>
);

const navItems = ['首页', '行情', '交易', '投顾', '理财', 'Level2', '选股', '数据', '资讯'];
const marketTabs = ['自选股', '我的版面', '全景图', '沪深个股', '沪深板块', '沪深指数', '创业板', '科创板', '新股IPO', '沪深港通', '基金理财', '股转系统', '港股市场', '期货市场', '期权市场', '上海黄金', '债券市场'];

const Logo = () => (
  <div className="flex w-[238px] items-center pl-[18px] text-white">
    <svg width={28} height={28} viewBox="0 0 28 28" className="shrink-0">
      <circle cx={14} cy={14} r={13} fill="none" stroke="#fff" strokeWidth={2} />
      <circle cx={14} cy={14} r={10} fill="#fff" />
      <path d="M5.5 9h17M5.5 19h17" stroke="#bb0018" strokeWidth={1.4} />
      <path d="M9 6v16M14 4v20M19 6v16" stroke="#bb0018" strokeWidth={2} />
    </svg>
    <div className="ml-[4px] flex w-[90px] flex-col">
      <span className="text-[14.5px] font-bold leading-[17px] tracking-[0.2px]">中信建投证券</span>
      <span className="whitespace-nowrap text-[9.5px] font-bold leading-[11px]">CHINA SECURITIES</span>
    </div>
    <span className="ml-[4px] h-[22px] w-px bg-white" />
    <span className="ml-[6px] whitespace-nowrap text-[15px] font-bold">卓越版</span>
  </div>
);

const Header = () => (
  <div className="flex h-[34px] items-stretch bg-[#bb0018] text-[14px] text-white">
    <Logo />
    <div className="flex">
      {navItems.map((n) => (
        <span
          key={n}
          className={`flex items-center justify-center whitespace-nowrap ${n === '行情' ? 'bg-[#a0000c]' : ''} ${n === 'Level2' ? 'w-[67px]' : 'w-[54px]'}`}
        >
          {n}
        </span>
      ))}
    </div>
    <div className="ml-auto flex items-center pr-[14px]">
      <span className="w-[144px] text-[12px]">证券交易未登录</span>
      <ArrowLeft size={22} strokeWidth={1.2} />
      <span className="ml-[25px] flex h-[16px] w-[16px] items-center justify-center rounded-full bg-white text-[12px] font-bold text-[#bb0018]">?</span>
      <span className="ml-[3px] w-[56px] text-[13px]">咨询</span>
      <Mail size={19} strokeWidth={1.2} />
      <ChartPie size={19} strokeWidth={1.2} className="ml-[25px]" />
      <Settings size={19} strokeWidth={1.2} className="ml-[25px]" />
      <Minus size={18} strokeWidth={1.2} className="ml-[25px]" />
      <svg width={16} height={18} viewBox="0 0 16 18" fill="none" stroke="#fff" className="ml-[28px]">
        <rect x={1.5} y={4.5} width={9} height={12} />
        <path d="M4.5 4V1.5h9v11h-3" />
      </svg>
      <X size={20} strokeWidth={1} className="ml-[24px]" />
    </div>
  </div>
);

const MarketTabs = () => (
  <div className="flex h-[32px] items-stretch bg-[#2f333e] pl-[1px] text-[14px] text-[#e0e0e0]">
    {marketTabs.map((t, i) => (
      <span
        key={t}
        className={`flex w-[106px] items-center justify-center whitespace-nowrap ${i === 0 ? 'mr-[1px] w-[104px] bg-[#7a2232]' : ''}`}
      >
        {t}
      </span>
    ))}
    <span className="flex w-[26px] items-center justify-center">
      <Triangle size={10} className="rotate-180 fill-[#e0e0e0] text-[#e0e0e0]" />
    </span>
    <span className="my-[2px] w-px self-stretch bg-[#14161c]" />
  </div>
);

export default function App() {
  return (
    <div className="flex h-[1042px] w-[1920px] flex-col overflow-hidden bg-[#1b1e27] [font-family:'Liberation_Sans','Noto_Sans_CJK_SC',sans-serif]">
      <Header />
      <div className="h-[2px] bg-[#14161c]" />
      <MarketTabs />
      <div className="h-[2px] bg-[#14161c]" />
      <div className="flex flex-1">
        <div className="flex w-[1895px] flex-col">
          <div className="flex h-[945px]">
            <div className="flex w-[1624px] flex-col">
              <MainPane />
              <VolPane />
              <MacdPane />
              <KdPane />
              <TimeAxis />
              <Toolbar />
              <BottomTabs />
            </div>
            <QuotePanel />
          </div>
          <StatusBar />
        </div>
        <Sidebar />
      </div>
    </div>
  );
}
